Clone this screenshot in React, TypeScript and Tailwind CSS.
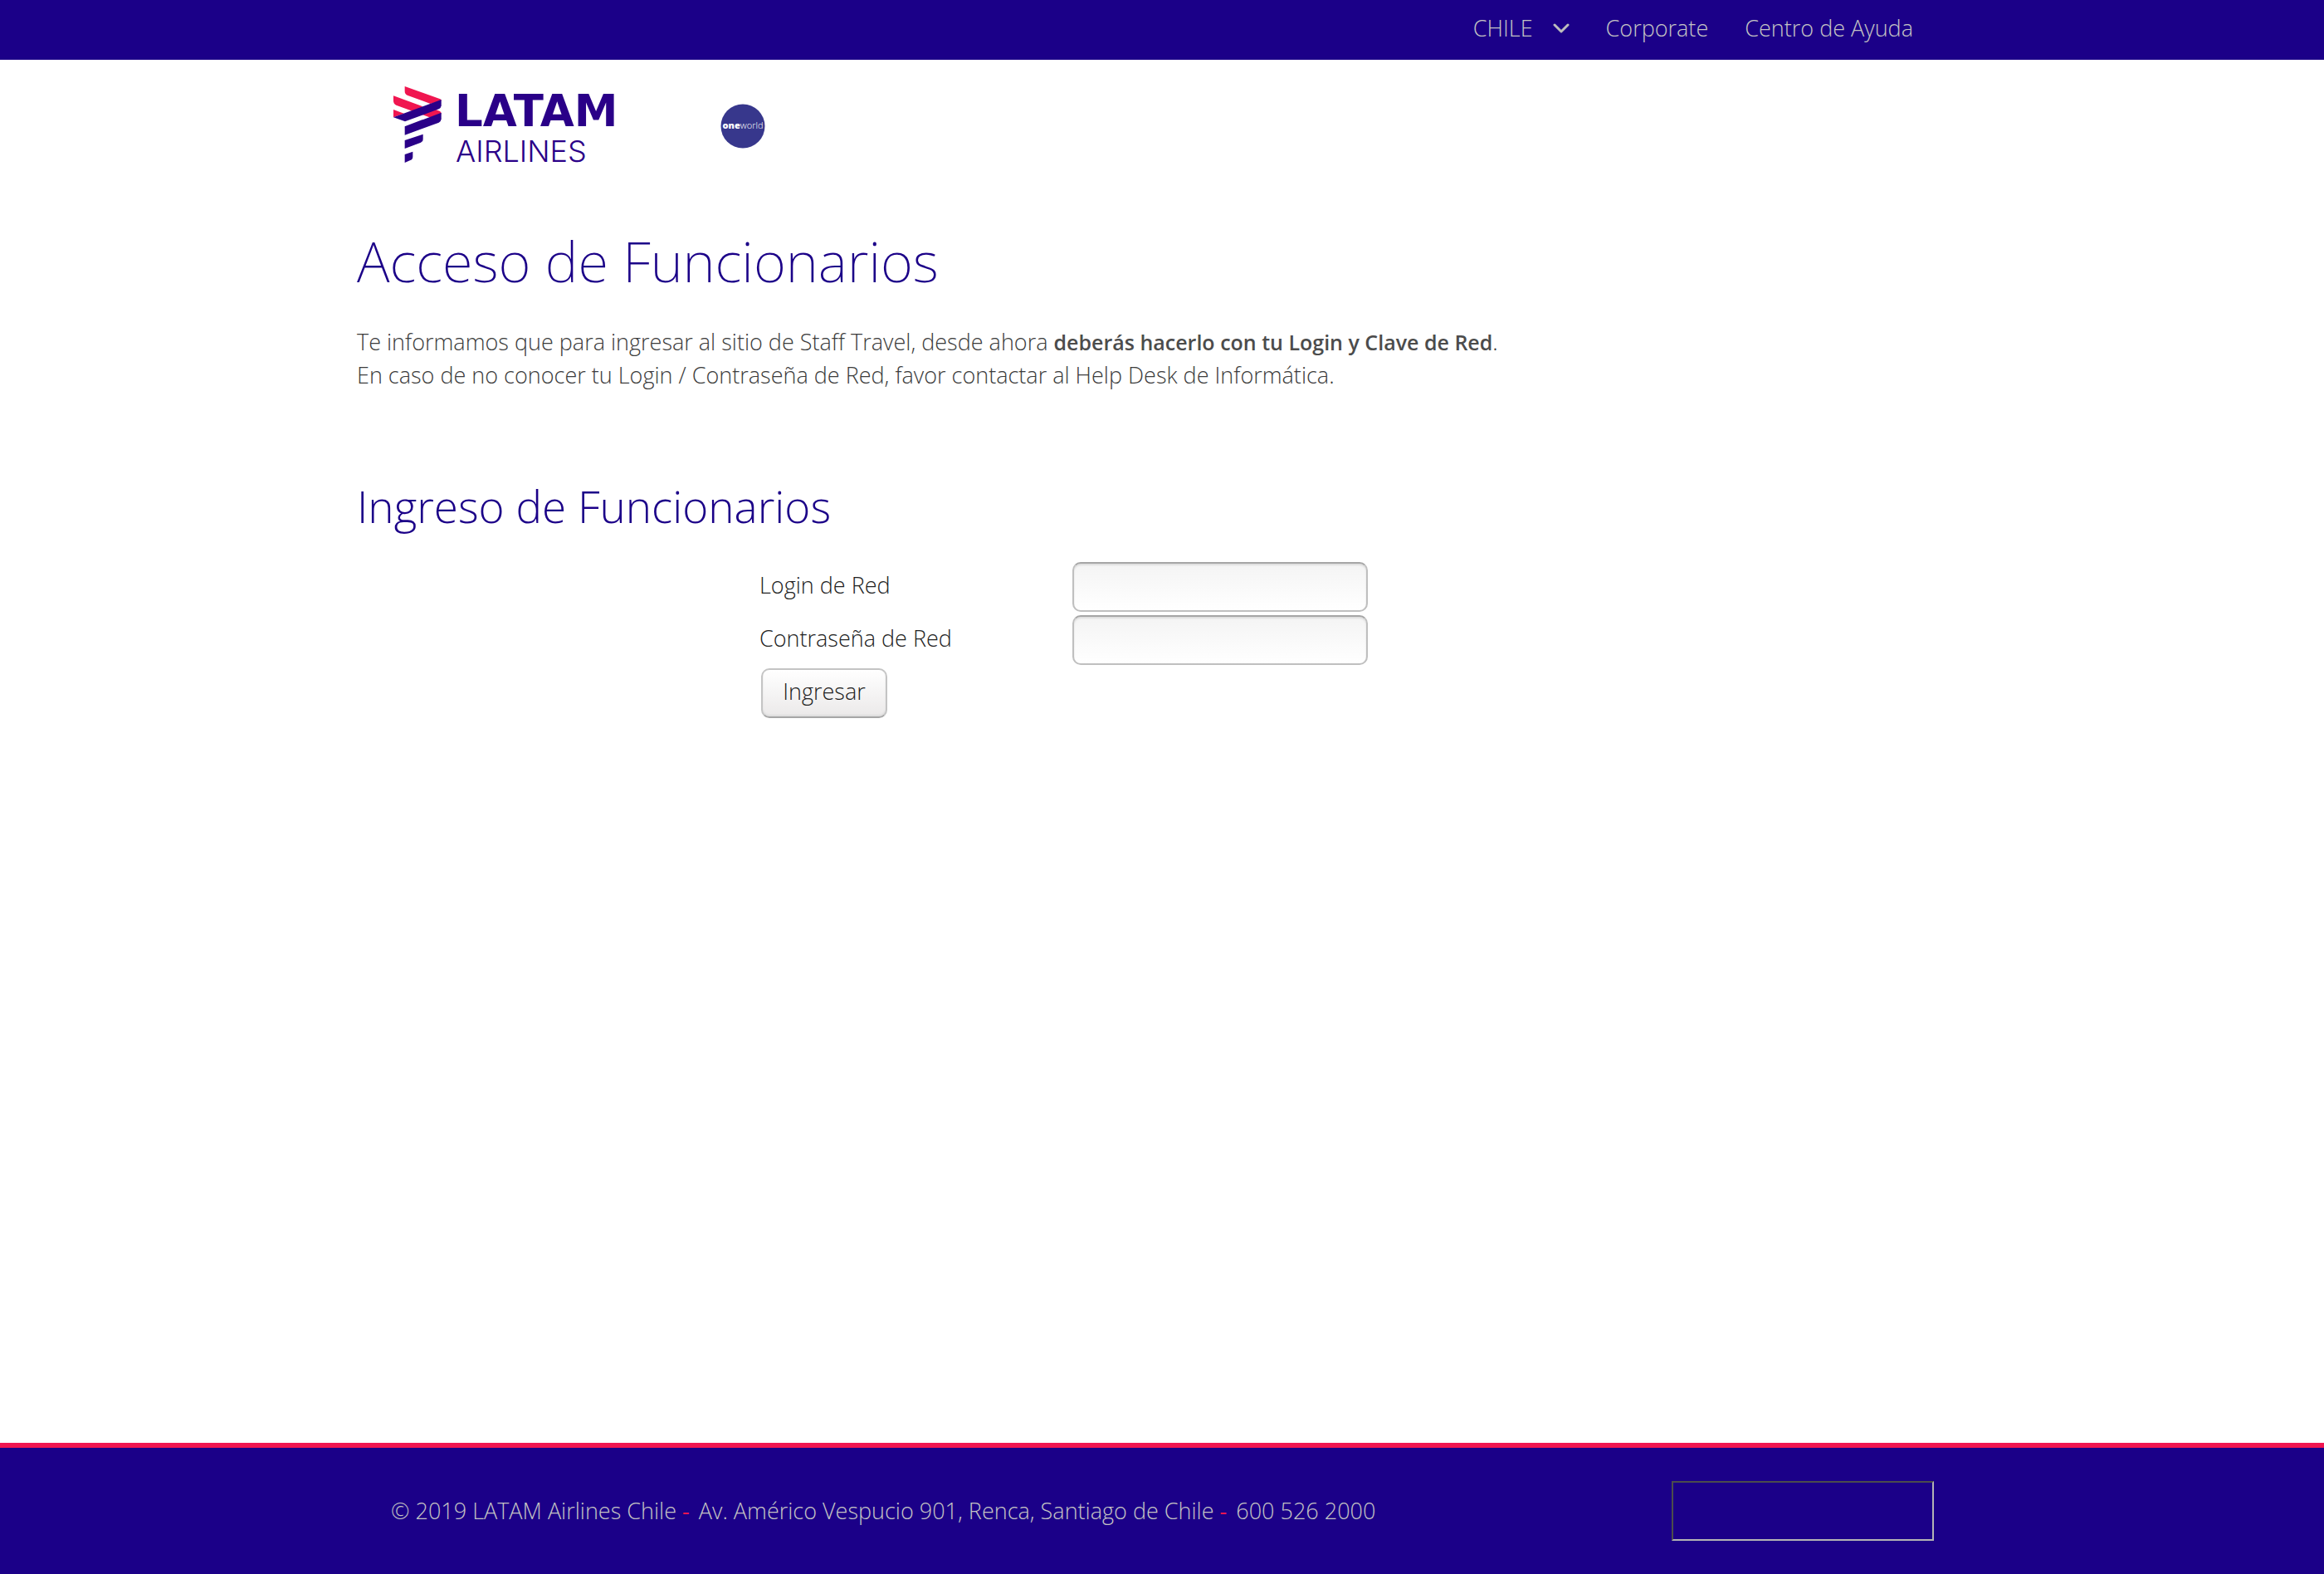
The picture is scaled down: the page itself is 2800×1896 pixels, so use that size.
function LatamMark() {
  return (
    <svg viewBox="42 42 174 288" className="h-[96px] w-[58px]" aria-hidden="true">
      <g fill="#f01650">
        <path d="M83 42 L211 88 Q215 90 215 94 L176 105 L94 75 Q83 71 83 60 Z" />
        <path d="M42 76 L144 113 Q150 117 144 120 L110 131 L52 110 Q42 106 42 94 Z" />
        <path d="M42 126 L80 140 L42 154 Z" />
        <path d="M146 144 L190 124 L210 132 Q215 134 215 142 L178 156 Z" />
      </g>
      <path d="M42 154 L215 90 V112 Q214 121 206 124 L84 169 Z" fill="#2a0088" />
      <path d="M83 187 L215 137 V160 Q214 170 206 173 L83 218 Z" fill="#2a0088" />
      <path d="M83 237 L149 215 V233 Q149 242 141 245 L83 267 Z" fill="#2a0088" />
      <path d="M83 288 L112 278 V296 Q112 306 103 309 L83 318 Z" fill="#2a0088" />
    </svg>
  );
}

function Chevron() {
  return (
    <svg viewBox="0 0 20 14" className="h-[14px] w-5" fill="none" stroke="#bdbdbd" strokeWidth="3" strokeLinecap="round" strokeLinejoin="round" aria-hidden="true">
      <path d="M2 3 L10 11 L18 3" />
    </svg>
  );
}

const fieldClass =
  "h-[60px] w-[356px] rounded-[10px] border-2 border-[#bfbfbf] border-t-[#a6a6a6] bg-linear-to-b from-[#f4f4f4] to-white px-3 shadow-[inset_0_2px_2px_#dddddd] outline-none";

export default function App() {
  return (
    <div className="flex min-h-screen flex-col bg-white font-['Open_Sans',sans-serif] text-[27px] leading-10 font-light text-[#222222]">
      <header>
        <div className="bg-[#1b0088] text-[#c4c4c4]">
          <nav className="mx-auto flex h-[72px] max-w-[1940px] items-center justify-end gap-11 pr-[65px] pb-1">
            <button type="button" className="flex items-center gap-6">
              CHILE
              <Chevron />
            </button>
            <a href="#corporate">Corporate</a>
            <a href="#ayuda">Centro de Ayuda</a>
          </nav>
        </div>
        <div className="mx-auto flex max-w-[1940px] items-center gap-[88px] px-11 pt-8">
          <a href="#inicio" className="flex items-center gap-4">
            <LatamMark />
            <svg viewBox="0 0 232 96" className="h-[96px] w-[232px] overflow-visible" fill="#2a0088" role="img" aria-label="LATAM Airlines">
              <text x="0" y="48" fontFamily="DejaVu Sans" fontWeight="700" fontSize="53">LATAM</text>
              <text x="1" y="91" fontFamily="Inter" fontWeight="300" fontSize="36">AIRLINES</text>
            </svg>
          </a>
          <svg viewBox="0 0 54 54" className="h-[54px] w-[54px]" role="img" aria-label="oneworld">
            <circle cx="27" cy="27" r="26.5" fill="#37378c" />
            <text x="27" y="30" textAnchor="middle" fontFamily="Open Sans" fontSize="11" fill="#ffffff">
              <tspan fontWeight="800">one</tspan><tspan fontWeight="300">world</tspan>
            </text>
          </svg>
        </div>
      </header>

      <main className="mx-auto w-full max-w-[1940px] flex-1">
        <h1 className="mt-[66px] font-['Noto_Sans',sans-serif] text-[67px] leading-[96px] font-extralight text-[#1b0088]">
          Acceso de Funcionarios
        </h1>
        <p className="mt-[30px] text-[#3c3c3c]">
          Te informamos que para ingresar al sitio de Staff Travel, desde ahora{" "}
          <strong className="text-[25px] font-semibold text-[#4c4c4c]">deberás hacerlo con tu Login y Clave de Red</strong>.
          <br />
          En caso de no conocer tu Login / Contraseña de Red, favor contactar al Help Desk de Informática.
        </p>
        <h2 className="mt-[98px] text-[53px] leading-[80px] text-[#1b0088]">Ingreso de Funcionarios</h2>
        <form className="mx-auto mt-[25px] w-[970px]" onSubmit={(e) => e.preventDefault()}>
          <div className="flex h-16 items-center">
            <label htmlFor="login" className="w-[377px] pb-1">Login de Red</label>
            <input id="login" type="text" className={fieldClass} />
          </div>
          <div className="flex h-16 items-center">
            <label htmlFor="clave" className="w-[377px] pb-1">Contraseña de Red</label>
            <input id="clave" type="password" className={fieldClass} />
          </div>
          <div className="flex h-16 items-center pl-0.5">
            <button type="submit" className="h-[60px] w-[152px] rounded-[10px] border-2 border-[#c4c4c4] border-b-[#a6a6a6] bg-linear-to-b from-white to-[#ebe9e9] pb-1 shadow-[inset_0_-2px_2px_#dddddd]">
              Ingresar
            </button>
          </div>
        </form>
      </main>

      <footer className="border-t-[6px] border-[#f01650] bg-[#1b0088] text-[#c4c4c4]">
        <div className="mx-auto flex h-[152px] max-w-[1940px] items-center justify-between pr-10 pl-[41px]">
          <p>
            © 2019 LATAM Airlines Chile <span className="font-normal text-[#f01650]">-</span>{" "}
            <span className="ml-1">Av. Américo Vespucio 901, Renca, Santiago de Chile</span>{" "}
            <span className="font-normal text-[#f01650]">-</span> <span className="ml-1">600 526 2000</span>
          </p>
          <div className="h-[72px] w-[316px] border-2 border-t-[#4c4c4c] border-r-[#b4b4b4] border-b-[#b4b4b4] border-l-[#4c4c4c]" />
        </div>
      </footer>
    </div>
  );
}
